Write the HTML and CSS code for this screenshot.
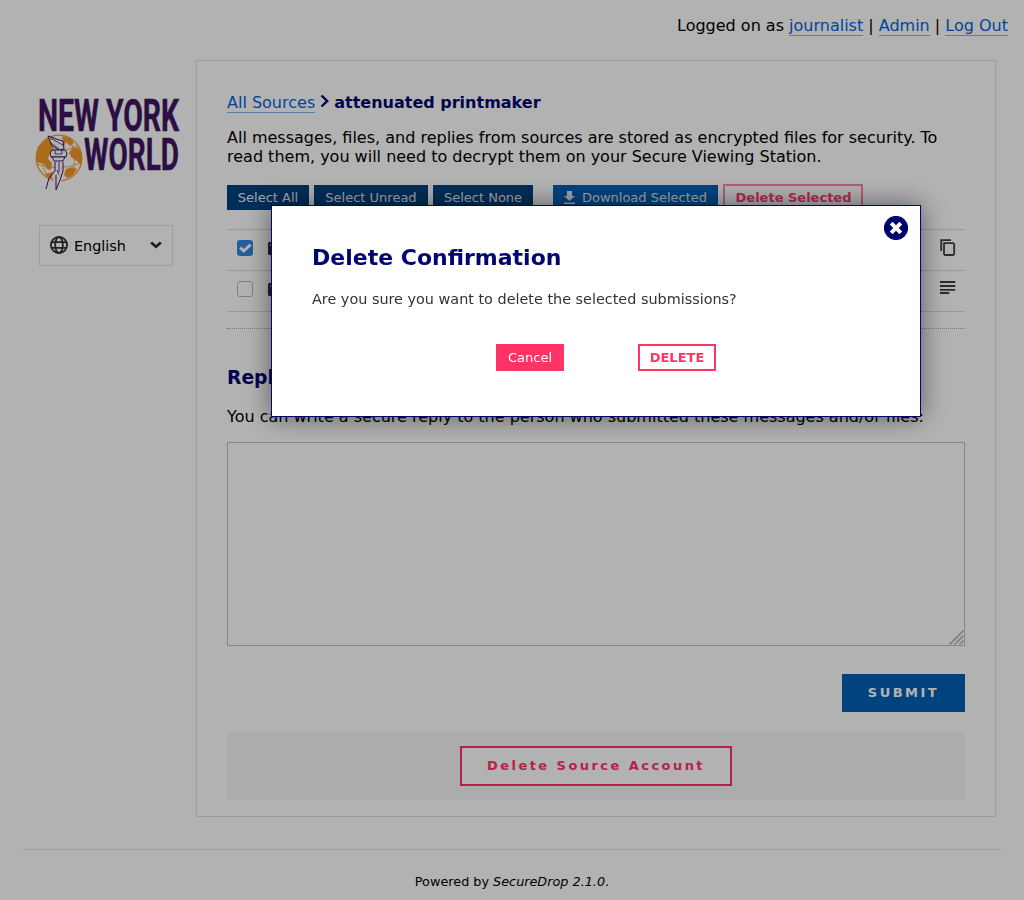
FILE: index.html
```html
<!DOCTYPE html>
<html lang="en">
<head>
<meta charset="utf-8">
<title>SecureDrop</title>
<link rel="stylesheet" href="styles.css">
</head>
<body>
<header class="topbar"><span>Logged on as <a href="#">journalist</a> | <a href="#">Admin</a> | <a href="#">Log Out</a></span></header>
<div class="layout">
  <aside class="sidebar">
    <svg class="logo" width="146" height="94" viewBox="0 0 146 94" role="img">
      <g class="logo-text">
        <text x="3" y="33" textLength="141" lengthAdjust="spacingAndGlyphs">NEW YORK</text>
        <text x="49" y="71.5" textLength="95" lengthAdjust="spacingAndGlyphs">WORLD</text>
      </g>
      <circle cx="24" cy="60" r="22.8" fill="none" stroke="#f79829" stroke-width="1.3"/>
      <g fill="#f79829">
        <path d="M7 45L13 40L18 38L20 46L17 48L19 52L15 54L13 61L17 65L16 72L12 71L9 66L2 64L1 56L3 49Z"/>
        <path d="M27 38L35 40L39 45L35 48L31 44L29 48ZM37 50L43 49L47 56L46 67L42 63L37 60L34 55Z"/>
        <path d="M31 71L37 69L42 71L38 77L32 80L29 77ZM10 76L18 74L19 81L14 80Z"/>
      </g>
      <path d="M4 49Q24 58 43 47M2 66Q23 74 46 65M11 42Q3 60 12 79M34 40Q45 60 35 80" fill="none" stroke="#f79829" stroke-width=".8"/>
      <path d="M20 64H28V72L26 84H19L17 78L20 72Z" fill="#fff"/>
      <g fill="#fff" stroke="#3e1560" stroke-width="1" stroke-linejoin="round">
        <path d="M13 38L21 41L28 43L29 51L24 52L17 48Z"/>
        <path d="M17 52L30 52L32 55L31 59L16 59L15 55Z"/>
        <path d="M17 59L30 59L28 63L19 63Z"/>
        <path d="M20 64V73L14 80L11 91M28 64V73L25 82L21 92V77" fill="none"/>
        <path d="M20 52V56H27V52M15 40L28 47M16 45L24 51M24 64V74M22 72L24 77" fill="none" stroke-width=".8"/>
      </g>
    </svg>
    <div class="language">
      <svg width="18" height="18" viewBox="0 0 18 18" fill="none" stroke="#303030" stroke-width="1.8"><circle cx="9" cy="9" r="8.1"/><ellipse cx="9" cy="9" rx="3.8" ry="8"/><path d="M1.5 6.2H16.5M1.5 11.8H16.5"/></svg>
      <span>English</span>
      <svg class="caret" width="12" height="8" viewBox="0 0 12 8"><path d="M1.2 1.5L6 5.7L10.8 1.5" fill="none" stroke="#2b2b2b" stroke-width="2.8"/></svg>
    </div>
  </aside>
  <main class="panel">
    <nav class="crumbs"><a href="#">All Sources</a><svg width="9" height="14" viewBox="0 0 9 14"><path d="M1.5 1.5L7.2 7L1.5 12.5" fill="none" stroke="#00066d" stroke-width="2.4"/></svg><strong>attenuated printmaker</strong></nav>
    <p class="intro">All messages, files, and replies from sources are stored as encrypted files for security. To read them, you will need to decrypt them on your Secure Viewing Station.</p>
    <div class="actions">
      <button class="btn dark select-all">Select All</button>
      <button class="btn dark select-unread">Select Unread</button>
      <button class="btn dark select-none">Select None</button>
      <button class="btn download"><svg width="11" height="13" viewBox="0 0 11 13"><path d="M3 0H8V5H11L5.5 10L0 5H3ZM0 11.5H11V13H0Z" fill="#e9eef5"/></svg>Download Selected</button>
      <button class="btn delete-selected">Delete Selected</button>
    </div>
    <div class="rows">
      <div class="row">
        <span class="check checked"><svg width="16" height="16" viewBox="0 0 16 16"><path d="M3.2 7.7L6.7 11L13.6 4.6" fill="none" stroke="#fff" stroke-width="3"/></svg></span>
        <svg class="mail" width="16" height="13" viewBox="0 0 16 13"><path d="M1 0H15L16 1V12L15 13H1L0 12V1Z" fill="#303030"/><path d="M2 3L8 7L14 3" fill="none" stroke="#fff"/></svg>
        <svg class="kind" width="16" height="18" viewBox="0 0 16 18"><path d="M1.2 12V1.2H11M4 4.2H13.2L14.2 5.2V15L13.2 16H5L4 15Z" fill="none" stroke="#404040" stroke-width="1.8"/></svg>
      </div>
      <div class="row">
        <span class="check"></span>
        <svg class="mail" width="16" height="13" viewBox="0 0 16 13"><path d="M1 0H15L16 1V12L15 13H1L0 12V1Z" fill="#303030"/><path d="M2 3L8 7L14 3" fill="none" stroke="#fff"/></svg>
        <svg class="kind lines" width="16" height="13" viewBox="0 0 16 13"><path d="M0 1H15.3M0 5H15.3M0 8.8H15.3M0 12H9.3" fill="none" stroke="#404040" stroke-width="1.8"/></svg>
      </div>
    </div>
    <hr class="dotted">
    <h2>Reply</h2>
    <p class="hint">You can write a secure reply to the person who submitted these messages and/or files:</p>
    <div class="reply-box"><svg width="15" height="15" viewBox="0 0 15 15"><path d="M.5 14.5L14.5 .5M5.5 14.5L14.5 5.5M10.5 14.5L14.5 10.5" fill="none" stroke="#b8b8b8" stroke-width="1.7"/></svg></div>
    <div class="submit-line"><button class="submit">SUBMIT</button></div>
    <div class="danger"><button class="delete-source">Delete Source Account</button></div>
  </main>
</div>
<footer>Powered by&nbsp;<em>SecureDrop 2.1.0</em>.</footer>
<div class="overlay">
  <section class="modal">
    <a class="close" href="#"><svg width="24" height="24" viewBox="0 0 24 24"><circle cx="12" cy="12" r="12.1" fill="#00006b"/><path d="M7.2 7.2L16.8 16.8M16.8 7.2L7.2 16.8" stroke="#fff" stroke-width="4"/></svg></a>
    <h1>Delete Confirmation</h1>
    <p>Are you sure you want to delete the selected submissions?</p>
    <div class="modal-actions"><button class="cancel">Cancel</button><button class="confirm">DELETE</button></div>
  </section>
</div>
</body>
</html>
```
FILE: styles.css
```css
* { box-sizing: border-box; }
body { margin: 0; height: 900px; overflow: hidden; background: #fff; color: #000; font: 16px/19px "DejaVu Sans", sans-serif; }
p, h1, h2 { margin: 0; }
svg { display: block; flex: none; }
button { font: 13px/15px "DejaVu Sans", sans-serif; margin: 0; border: 0; padding: 0; border-radius: 0; white-space: nowrap; }
a { color: #0065db; text-decoration: none; border-bottom: 1px solid #80b2ed; }
.topbar { height: 60px; padding: 16px 16px 0 0; text-align: right; }
.layout { display: flex; height: 757px; }
.sidebar { width: 196px; padding-left: 35px; }
.logo { margin-top: 38px; overflow: visible; }
.logo-text { font: bold 43.5px Roboto, sans-serif; fill: #3e1560; stroke: #3e1560; stroke-width: .5px; }
.language { display: flex; align-items: center; width: 134px; height: 41px; margin: 33px 0 0 4px; padding: 0 10px; border: 1px solid #e2e2e2; font-size: 14.4px; }
.language svg { margin-bottom: 1px; }
.language span { margin: 1px 0 0 6px; }
.language .caret { margin-left: auto; }
.panel { width: 800px; border: 1px solid #e0e0e0; padding: 32px 30px 0; }
.crumbs { display: flex; height: 20px; }
.crumbs svg { margin: 1px 5px 0; }
.crumbs strong { color: #00066d; }
.intro { margin-top: 15px; }
.actions { display: flex; align-items: flex-start; height: 27px; margin-top: 18px; }
.btn { display: flex; align-items: center; justify-content: center; height: 25px; margin: 1px 5px 0 0; color: #e9eef5; }
.dark { background: #004280; }
.select-all { width: 82px; }
.select-unread { width: 114px; }
.select-none { width: 100px; }
.download { width: 165px; margin-left: 15px; background: #0061b7; }
.download svg { margin-right: 7px; }
.delete-selected { width: 140px; height: 27px; margin: 0; padding-left: 1px; background: transparent; border: 2px solid #ff85a3; color: #ff3d6e; font-weight: bold; }
.rows { margin-top: 18px; border-top: 1px solid #dcdcdc; }
.row { display: flex; align-items: center; height: 41px; padding: 0 9px 5px 10px; border-bottom: 1px solid #dcdcdc; }
.check { width: 16px; height: 16px; border: 1px solid #bbb5b0; border-radius: 3px; }
.checked { border: 0; background: #3584e4; }
.mail { margin: 2px 0 0 15px; }
.kind { margin-left: auto; }
.lines { margin-bottom: 3px; }
.dotted { margin: 16px 0 0; border: 0; border-top: 1px dotted #aaa; }
h2 { margin-top: 38px; color: #00066d; font-size: 18.7px; line-height: 22px; }
.hint { margin-top: 18px; }
.reply-box { display: flex; align-items: flex-end; justify-content: flex-end; height: 204px; margin-top: 16px; border: 1px solid #c4c0bd; }
.submit-line { display: flex; justify-content: flex-end; margin-top: 28px; }
.submit { width: 123px; height: 38px; padding-bottom: 2px; background: #0061b7; color: #fff; font-weight: bold; letter-spacing: 2.5px; }
.danger { display: flex; justify-content: center; height: 68px; margin-top: 20px; padding-top: 14px; background: #f7f7f7; }
.delete-source { width: 272px; height: 40px; padding-bottom: 2px; background: #fff; border: 2px solid #f36; color: #f36; font-weight: bold; letter-spacing: 2.45px; }
footer { display: flex; justify-content: center; margin: 32px 23px 0 22px; padding: 22px 0 0 1px; border-top: 1px solid #e3e3ea; font-size: 12.8px; }
.overlay { position: fixed; inset: 0; display: flex; align-items: flex-start; padding: 205px 0 0 271px; background: rgba(0, 0, 0, .3); }
.modal { position: relative; width: 650px; height: 212px; padding: 38px 40px; background: #fff; border: 1px solid #00066d; box-shadow: 0 0 25px rgba(0, 0, 0, .5); }
.close { position: absolute; top: 10px; right: 12px; border: 0; }
.modal h1 { color: #00066d; font-size: 22px; line-height: 28px; }
.modal p { margin-top: 17px; color: #333; font-size: 14.4px; line-height: 20px; }
.modal-actions { display: flex; gap: 74px; margin: 35px 0 0 184px; }
.cancel { width: 68px; height: 27px; background: #f36; color: #fff; }
.confirm { width: 78px; height: 27px; background: #fff; border: 2px solid #f36; color: #f36; font-weight: bold; }
```
